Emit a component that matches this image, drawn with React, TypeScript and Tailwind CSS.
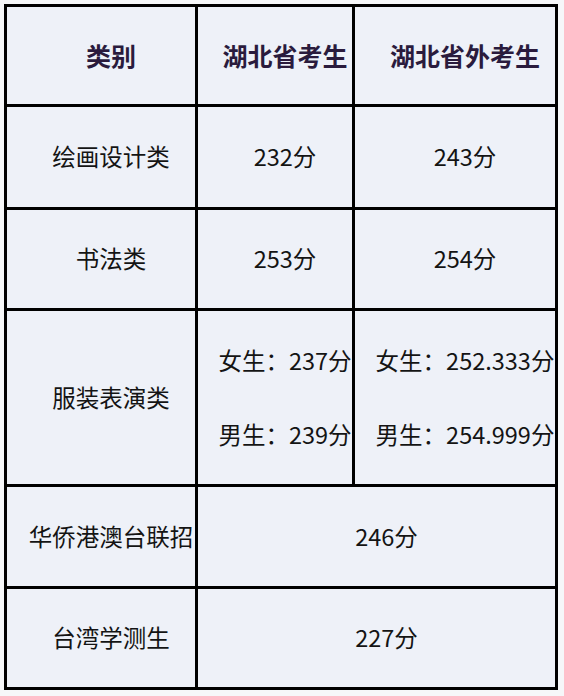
const font = { fontFamily: '"Noto Sans CJK SC", "Noto Sans", sans-serif' };

function Cell({ children, className = "" }: { children: React.ReactNode; className?: string }) {
  return (
    <div
      className={`bg-[#eef1f8] flex items-center justify-center pl-[20px] whitespace-nowrap text-[23.5px] text-[#141414] ${className}`}
    >
      {children}
    </div>
  );
}

function Head({ children }: { children: React.ReactNode }) {
  return (
    <div className="bg-[#eef1f8] flex items-center justify-center pl-[20px] whitespace-nowrap text-[25px] font-bold text-[#2a1b3d]">
      {children}
    </div>
  );
}

export default function App() {
  return (
    <div className="w-[564px] h-[696px] bg-[#f6f7f9] pt-[4px] pl-[4px]" style={font}>
      <div className="grid w-[554px] grid-cols-[188px_154px_200px] grid-rows-[97px_100px_98px_173px_99px_98px] gap-[3px] bg-black p-[3px] leading-none">
        <Head>类别</Head>
        <Head>湖北省考生</Head>
        <Head>湖北省外考生</Head>

        <Cell>绘画设计类</Cell>
        <Cell>232分</Cell>
        <Cell>243分</Cell>

        <Cell>书法类</Cell>
        <Cell>253分</Cell>
        <Cell>254分</Cell>

        <Cell>服装表演类</Cell>
        <Cell className="flex-col gap-[50px]">
          <span>女生：237分</span>
          <span>男生：239分</span>
        </Cell>
        <Cell className="flex-col gap-[50px]">
          <span>女生：252.333分</span>
          <span>男生：254.999分</span>
        </Cell>

        <Cell className="pl-[18px]">华侨港澳台联招</Cell>
        <Cell className="col-span-2">246分</Cell>

        <Cell>台湾学测生</Cell>
        <Cell className="col-span-2">227分</Cell>
      </div>
    </div>
  );
}
